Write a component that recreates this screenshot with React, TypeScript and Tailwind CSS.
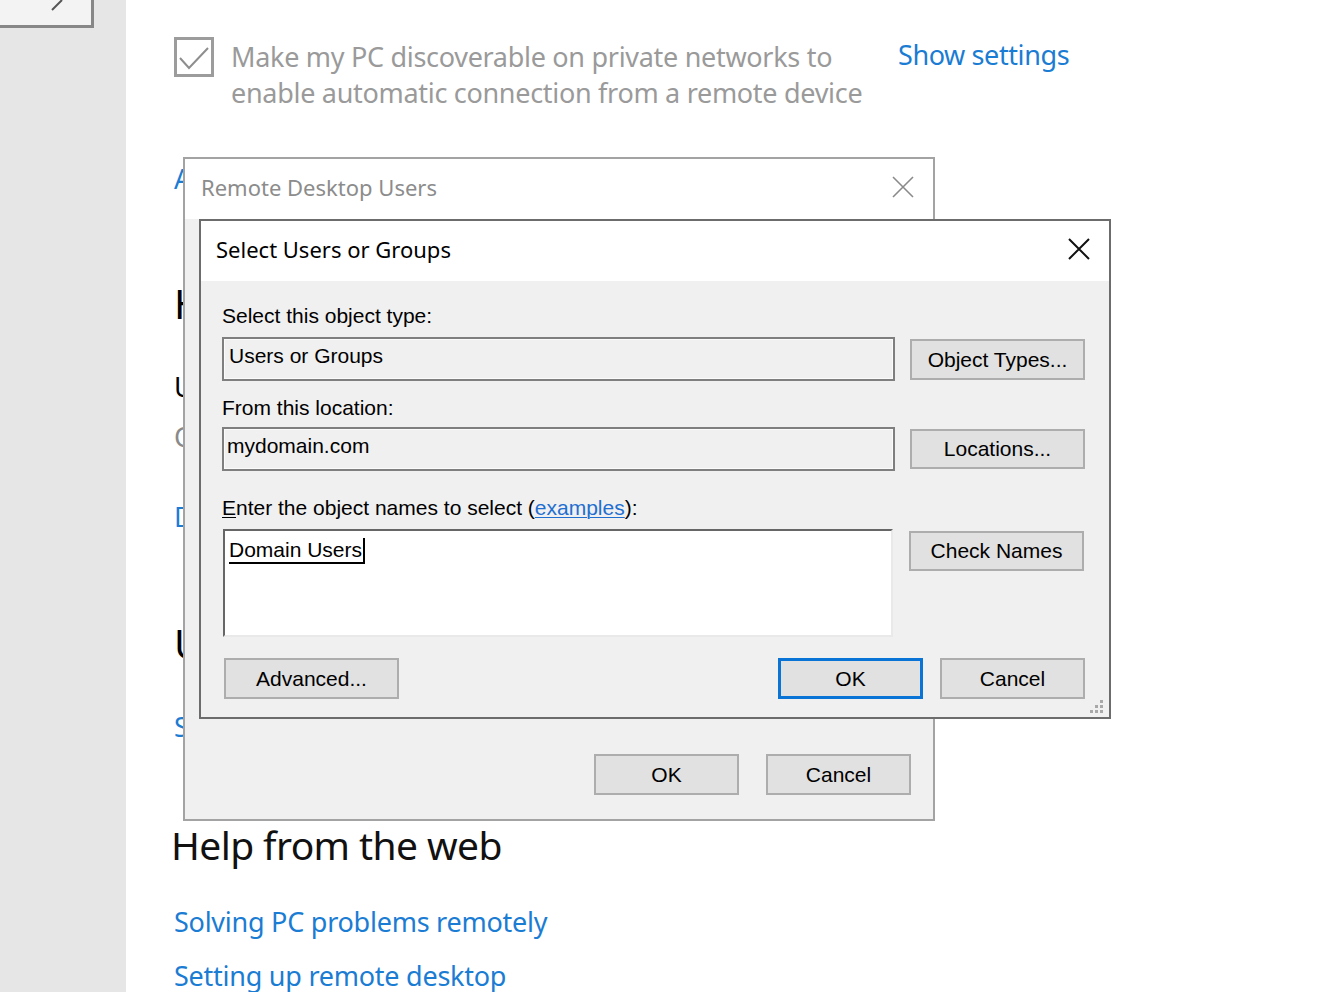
import React from "react";

const segoe = "font-['Noto_Sans','Open_Sans',sans-serif]";
const mss = "font-['Liberation_Sans',Arial,sans-serif]";

function WinButton({
  children,
  className = "",
  primary = false,
}: {
  children: React.ReactNode;
  className?: string;
  primary?: boolean;
}) {
  return (
    <div
      className={`flex items-center justify-center bg-[#e1e1e1] text-[21px] text-black ${mss} ${
        primary ? "border-[3px] border-[#0a74d6]" : "border-2 border-[#adadad]"
      } ${className}`}
    >
      {children}
    </div>
  );
}

function CloseX({ color, stroke }: { color: string; stroke: number }) {
  return (
    <svg width="22" height="22" viewBox="0 0 22 22">
      <path d="M1 1 L21 21 M21 1 L1 21" stroke={color} strokeWidth={stroke} fill="none" />
    </svg>
  );
}

export default function App() {
  return (
    <div className="relative flex h-[992px] w-[1330px] overflow-hidden bg-white">
      {/* Sidebar */}
      <div className="w-[126px] shrink-0 bg-[#e6e6e6]">
        <div className="relative h-[28px] w-[94px] border-b-[3px] border-r-[3px] border-[#878787] bg-[#f3f3f3]">
          <svg className="absolute left-[50px] top-0" width="16" height="12" viewBox="0 0 16 12">
            <path d="M2 10 L12 0" stroke="#555" strokeWidth="2" fill="none" />
          </svg>
        </div>
      </div>

      {/* Main content */}
      <div className={`flex flex-1 flex-col pl-[48px] ${segoe}`}>
        <div className="mt-[37px] flex items-start">
          <div className="relative h-[40px] w-[40px] shrink-0 border-[3px] border-[#9c9c9c] bg-white">
            <svg className="absolute left-[1px] top-[6px]" width="32" height="24" viewBox="0 0 32 24">
              <path d="M2 12 L11 22 L30 2" stroke="#8e8e8e" strokeWidth="2" fill="none" />
            </svg>
          </div>
          <div className="ml-[17px] mt-[2px] w-[667px] text-[27px] leading-[36px] tracking-[-0.3px] text-[#9a9a9a]">
            Make my PC discoverable on private networks to
            <br />
            enable automatic connection from a remote device
          </div>
          <div className="mt-0 text-[27px] leading-[36px] tracking-[-0.4px] text-[#1b7cd3]">Show settings</div>
        </div>

        <div className="mt-[48px] text-[27px] leading-[40px] text-[#1b7cd3]">Advanced settings</div>
        <div className="mt-[77px] text-[40px] leading-[56px] text-black">How to connect to this PC</div>
        <div className="mt-[35px] text-[27px] leading-[40px] text-black">Use this PC name to connect from your remote device:</div>
        <div className="mt-[10px] text-[27px] leading-[40px] text-[#8a8a8a]">COMPUTER01</div>
        <div className="mt-[40px] text-[27px] leading-[40px] text-[#1b7cd3]">Don't have a Remote Desktop client on your remote device?</div>
        <div className="mt-[79px] text-[40px] leading-[56px] text-black">User accounts</div>
        <div className="mt-[35px] text-[27px] leading-[40px] text-[#1b7cd3]">Select users that can remotely access this PC</div>
        <div className="ml-[-3px] mt-[70px] text-[39px] leading-[56px] tracking-[-0.6px] text-[#111]">Help from the web</div>
        <div className="mt-[29px] text-[27px] leading-[40px] tracking-[-0.25px] text-[#1b7cd3]">Solving PC problems remotely</div>
        <div className="mt-[14px] text-[27px] leading-[40px] tracking-[-0.25px] text-[#1b7cd3]">Setting up remote desktop</div>
      </div>

      {/* Back dialog: Remote Desktop Users */}
      <div className="absolute left-[183px] top-[157px] flex h-[664px] w-[752px] flex-col border-2 border-[#a3a3a3] bg-[#f0f0f0]">
        <div className={`flex h-[60px] items-center justify-between bg-white pb-[4px] pl-[16px] pr-[19px] ${segoe}`}>
          <span className="text-[22px] tracking-[0px] text-[#8c8c8c]">Remote Desktop Users</span>
          <CloseX color="#8a8a8a" stroke={1.6} />
        </div>
        <div className="flex-1" />
        <div className="flex justify-end gap-[27px] pb-[24px] pr-[22px]">
          <WinButton className="h-[41px] w-[145px]">OK</WinButton>
          <WinButton className="h-[41px] w-[145px]">Cancel</WinButton>
        </div>
      </div>

      {/* Front dialog: Select Users or Groups */}
      <div className="absolute left-[199px] top-[219px] flex h-[500px] w-[912px] flex-col border-2 border-[#6c6c6c] bg-[#f0f0f0]">
        <div className={`flex h-[60px] shrink-0 items-center justify-between bg-white pb-[4px] pl-[15px] pr-[19px] ${segoe}`}>
          <span className="text-[22px] tracking-[0px] text-black">Select Users or Groups</span>
          <CloseX color="#111" stroke={2} />
        </div>
        <div className={`relative flex flex-1 flex-col pl-[21px] text-[21px] text-black ${mss}`}>
          <div className="mt-[23px] h-[24px] leading-[24px]">Select this object type:</div>
          <div className="mt-[9px] flex items-start gap-[15px]">
            <div className="h-[44px] w-[673px] border-2 border-[#7f7f7f] bg-[#f0f0f0] pl-[5px] pt-[5px] leading-[24px] shadow-[inset_0_0_0_1px_#fbfbfb]">
              Users or Groups
            </div>
            <WinButton className="mt-[2px] h-[41px] w-[175px]">Object Types...</WinButton>
          </div>

          <div className="mt-[15px] h-[24px] leading-[24px]">From this location:</div>
          <div className="mt-[7px] flex items-start gap-[15px]">
            <div className="h-[44px] w-[673px] border-2 border-[#7f7f7f] bg-[#f0f0f0] pl-[3px] pt-[5px] leading-[24px] shadow-[inset_0_0_0_1px_#fbfbfb]">
              mydomain.com
            </div>
            <WinButton className="mt-[2px] h-[40px] w-[175px]">Locations...</WinButton>
          </div>

          <div className="mt-[25px] h-[24px] leading-[24px]">
            <span className="underline decoration-1 underline-offset-2">E</span>nter the object names to select (
            <span className="text-[#1f6fd0] underline decoration-1 underline-offset-2">examples</span>):
          </div>
          <div className="mt-[9px] flex items-start gap-[15px]">
            <div className="ml-[1px] h-[108px] w-[670px] border-b-2 border-l-2 border-r-2 border-t-2 border-b-[#e9e9e9] border-l-[#666] border-r-[#e9e9e9] border-t-[#666] bg-white pl-[4px] pt-[3px]">
              <span className="inline-flex h-[26px] items-center border-b-2 border-r-2 border-black pr-[1px] leading-[24px]">
                Domain Users
              </span>
            </div>
            <WinButton className="ml-[1px] mt-[2px] h-[40px] w-[175px]">Check Names</WinButton>
          </div>

          <div className="mt-[21px] flex items-start justify-between pr-[24px]">
            <WinButton className="ml-[2px] h-[41px] w-[175px]">Advanced...</WinButton>
            <div className="flex gap-[17px]">
              <WinButton primary className="h-[41px] w-[145px]">OK</WinButton>
              <WinButton className="h-[41px] w-[145px]">Cancel</WinButton>
            </div>
          </div>

          <svg className="absolute bottom-[2px] right-[4px]" width="16" height="16" viewBox="0 0 16 16">
            <g fill="#a8a8a8">
              <rect x="11" y="1" width="3" height="3" />
              <rect x="6" y="6" width="3" height="3" />
              <rect x="11" y="6" width="3" height="3" />
              <rect x="1" y="11" width="3" height="3" />
              <rect x="6" y="11" width="3" height="3" />
              <rect x="11" y="11" width="3" height="3" />
            </g>
          </svg>
        </div>
      </div>
    </div>
  );
}
